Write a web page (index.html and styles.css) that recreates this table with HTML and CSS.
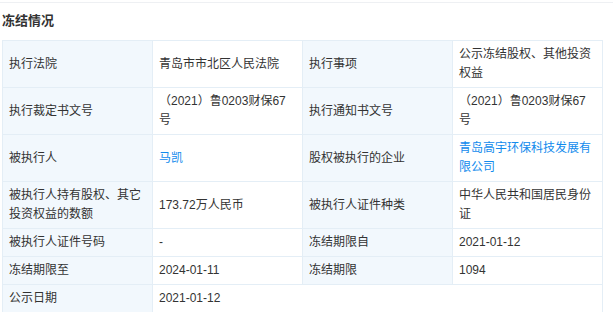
FILE: index.html
```html
<!DOCTYPE html>
<html lang="zh">
<head>
<meta charset="utf-8">
<link rel="stylesheet" href="styles.css">
</head>
<body>
<div class="topline"></div>
<section class="panel">
  <h3 class="title">冻结情况</h3>
  <table class="info">
    <colgroup><col class="c"><col class="c"><col class="c"><col class="c"></colgroup>
    <tr>
      <td class="lbl">执行法院</td>
      <td>青岛市市北区人民法院</td>
      <td class="lbl">执行事项</td>
      <td>公示冻结股权、其他投资权益</td>
    </tr>
    <tr>
      <td class="lbl">执行裁定书文号</td>
      <td>（2021）鲁0203财保67号</td>
      <td class="lbl">执行通知书文号</td>
      <td>（2021）鲁0203财保67号</td>
    </tr>
    <tr>
      <td class="lbl">被执行人</td>
      <td><a class="link">马凯</a></td>
      <td class="lbl">股权被执行的企业</td>
      <td><a class="link">青岛高宇环保科技发展有限公司</a></td>
    </tr>
    <tr>
      <td class="lbl">被执行人持有股权、其它投资权益的数额</td>
      <td>173.72万人民币</td>
      <td class="lbl">被执行人证件种类</td>
      <td>中华人民共和国居民身份证</td>
    </tr>
    <tr>
      <td class="lbl">被执行人证件号码</td>
      <td>-</td>
      <td class="lbl">冻结期限自</td>
      <td>2021-01-12</td>
    </tr>
    <tr>
      <td class="lbl">冻结期限至</td>
      <td>2024-01-11</td>
      <td class="lbl">冻结期限</td>
      <td>1094</td>
    </tr>
    <tr>
      <td class="lbl">公示日期</td>
      <td colspan="3">2021-01-12</td>
    </tr>
  </table>
</section>
</body>
</html>
```
FILE: styles.css
```css
html, body {
  margin: 0;
  padding: 0;
  background: #fff;
}
body {
  font-family: "Liberation Sans", "Noto Sans CJK SC", sans-serif;
  color: #333;
  font-size: 12px;
}
.topline {
  height: 2px;
  border-bottom: 1px solid #eef0f3;
}
.panel {
  padding: 0 2px;
}
.title {
  margin: 0;
  padding: 10px 0 0;
  height: 27px;
  box-sizing: border-box;
  font-size: 13px;
  font-weight: bold;
  line-height: 16px;
  color: #333;
}
.info {
  border-collapse: collapse;
  table-layout: fixed;
  width: 600px;
  margin-top: 10px;
}
.info .c {
  width: 150px;
}
.info td {
  border: 1px solid #e4eef6;
  padding: 4px 6px 4px 6px;
  line-height: 19px;
  vertical-align: middle;
  word-break: break-all;
}
.info td.lbl {
  background: #f2f8fd;
}
.link {
  color: #128bed;
  text-decoration: none;
}
```
